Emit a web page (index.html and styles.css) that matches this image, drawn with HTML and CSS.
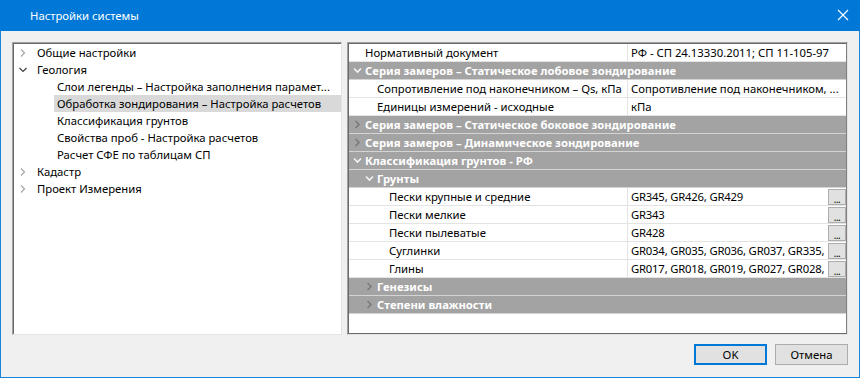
FILE: index.html
```html
<!DOCTYPE html>
<html lang="ru">
<head>
  <meta charset="UTF-8" />
  <title>Настройки системы</title>
  <link rel="stylesheet" href="styles.css">
</head>
<body>
  <div class="window">
    <div class="titlebar">
      <span class="title">Настройки системы</span>
      <span class="close">
        <svg width="12" height="12" viewBox="0 0 12 12"><path d="M1 1 L11 11 M11 1 L1 11" stroke="#fff" stroke-width="1.1" fill="none"/></svg>
      </span>
    </div>

    <div class="dialog">
      <div class="panes">
        <!-- дерево разделов -->
        <div class="tree">
          <div class="node">
            <span class="arrow"><svg width="8" height="8" viewBox="0 0 8 8"><path d="M2 0.5 L5.5 4 L2 7.5" class="chev closed"/></svg></span>
            <span class="label">Общие настройки</span>
          </div>
          <div class="node">
            <span class="arrow"><svg width="8" height="8" viewBox="0 0 8 8"><path d="M0.5 2 L4 5.5 L7.5 2" class="chev open"/></svg></span>
            <span class="label">Геология</span>
          </div>
          <div class="node child"><span class="label">Слои легенды – Настройка заполнения парамет...</span></div>
          <div class="node child selected"><span class="label">Обработка зондирования – Настройка расчетов</span></div>
          <div class="node child"><span class="label">Классификация грунтов</span></div>
          <div class="node child"><span class="label">Свойства проб - Настройка расчетов</span></div>
          <div class="node child"><span class="label">Расчет СФЕ по таблицам СП</span></div>
          <div class="node">
            <span class="arrow"><svg width="8" height="8" viewBox="0 0 8 8"><path d="M2 0.5 L5.5 4 L2 7.5" class="chev closed"/></svg></span>
            <span class="label">Кадастр</span>
          </div>
          <div class="node">
            <span class="arrow"><svg width="8" height="8" viewBox="0 0 8 8"><path d="M2 0.5 L5.5 4 L2 7.5" class="chev closed"/></svg></span>
            <span class="label">Проект Измерения</span>
          </div>
        </div>

        <!-- сетка свойств -->
        <div class="grid">
          <div class="grid-inner">
            <div class="prop">
              <div class="name lvl0">Нормативный документ</div>
              <div class="value">РФ - СП 24.13330.2011; СП 11-105-97</div>
            </div>
            <div class="cat">
              <span class="carrow"><svg width="9" height="9" viewBox="0 0 9 9"><path d="M1 2.5 L4.5 6 L8 2.5" class="cv open"/></svg></span>
              <span>Серия замеров – Статическое лобовое зондирование</span>
            </div>
            <div class="prop">
              <div class="name lvl1">Сопротивление под наконечником – Qs, кПа</div>
              <div class="value">Сопротивление под наконечником, ...</div>
            </div>
            <div class="prop">
              <div class="name lvl1">Единицы измерений - исходные</div>
              <div class="value">кПа</div>
            </div>
            <div class="cat">
              <span class="carrow"><svg width="9" height="9" viewBox="0 0 9 9"><path d="M2.5 1 L6 4.5 L2.5 8" class="cv closed"/></svg></span>
              <span>Серия замеров – Статическое боковое зондирование</span>
            </div>
            <div class="cat">
              <span class="carrow"><svg width="9" height="9" viewBox="0 0 9 9"><path d="M2.5 1 L6 4.5 L2.5 8" class="cv closed"/></svg></span>
              <span>Серия замеров – Динамическое зондирование</span>
            </div>
            <div class="cat">
              <span class="carrow"><svg width="9" height="9" viewBox="0 0 9 9"><path d="M1 2.5 L4.5 6 L8 2.5" class="cv open"/></svg></span>
              <span>Классификация грунтов - РФ</span>
            </div>
            <div class="cat sub">
              <span class="carrow"><svg width="9" height="9" viewBox="0 0 9 9"><path d="M1 2.5 L4.5 6 L8 2.5" class="cv open"/></svg></span>
              <span>Грунты</span>
            </div>
            <div class="prop">
              <div class="name lvl2">Пески крупные и средние</div>
              <div class="value"><span class="vtext">GR345, GR426, GR429</span><span class="dots">...</span></div>
            </div>
            <div class="prop">
              <div class="name lvl2">Пески мелкие</div>
              <div class="value"><span class="vtext">GR343</span><span class="dots">...</span></div>
            </div>
            <div class="prop">
              <div class="name lvl2">Пески пылеватые</div>
              <div class="value"><span class="vtext">GR428</span><span class="dots">...</span></div>
            </div>
            <div class="prop">
              <div class="name lvl2">Суглинки</div>
              <div class="value"><span class="vtext">GR034, GR035, GR036, GR037, GR335,</span><span class="dots">...</span></div>
            </div>
            <div class="prop">
              <div class="name lvl2">Глины</div>
              <div class="value"><span class="vtext">GR017, GR018, GR019, GR027, GR028,</span><span class="dots">...</span></div>
            </div>
            <div class="cat sub">
              <span class="carrow"><svg width="9" height="9" viewBox="0 0 9 9"><path d="M2.5 1 L6 4.5 L2.5 8" class="cv closed"/></svg></span>
              <span>Генезисы</span>
            </div>
            <div class="cat sub">
              <span class="carrow"><svg width="9" height="9" viewBox="0 0 9 9"><path d="M2.5 1 L6 4.5 L2.5 8" class="cv closed"/></svg></span>
              <span>Степени влажности</span>
            </div>
          </div>
        </div>
      </div>

      <div class="buttons">
        <button class="btn default">OK</button>
        <button class="btn">Отмена</button>
      </div>
    </div>
  </div>
</body>
</html>
```

FILE: styles.css
```css
* {
  box-sizing: border-box;
}

body {
  margin: 0;
  font-family: "Noto Sans", sans-serif;
  font-size: 11.3px;
  color: #000;
  background: #f0f0f0;
}

.window {
  width: 860px;
  height: 378px;
  border: 1px solid #1883d7;
  border-top: none;
  display: flex;
  flex-direction: column;
  background: #f0f0f0;
}

.titlebar {
  height: 31px;
  margin: 0 -1px;
  background: #0078d7;
  color: #fff;
  display: flex;
  align-items: center;
  justify-content: space-between;
  flex-shrink: 0;
}

.title {
  padding-left: 30px;
  padding-bottom: 1px;
}

.close {
  width: 12px;
  height: 12px;
  margin-right: 11px;
  margin-bottom: 1px;
  display: flex;
}

.dialog {
  flex: 1;
  padding: 11px 11px 0 11px;
  display: flex;
  flex-direction: column;
}

.panes {
  display: flex;
  gap: 5px;
  height: 293px;
}

/* tree */
.tree {
  width: 330px;
  background: #fff;
  border: 1px solid;
  border-color: #a0a0a0 #e3e3e3 #e3e3e3 #a0a0a0;
  box-shadow: inset 1px 1px 0 #696969;
  padding: 1px 0 0 1px;
}

.node {
  height: 17px;
  display: flex;
  align-items: center;
  white-space: nowrap;
}

.arrow {
  width: 18px;
  display: flex;
  justify-content: center;
}

.chev {
  fill: none;
  stroke-width: 1.2;
}

.chev.closed { stroke: #a6a6a6; }
.chev.open { stroke: #404040; }

.node .label {
  padding-left: 5px;
}

.node.child {
  margin-left: 40px;
}

.node.child .label {
  padding-left: 3px;
}

.node.selected {
  background: #d9d9d9;
}

/* property grid */
.grid {
  width: 501px;
  background: #fff;
  border: 1px solid;
  border-color: #a0a0a0 #e3e3e3 #e3e3e3 #a0a0a0;
  display: flex;
}

.grid-inner {
  flex: 1;
  border: 1px solid #696969;
  border-right-color: #808080;
  overflow: hidden;
}

.prop {
  height: 18px;
  border-bottom: 1px solid #e3e3e3;
  display: flex;
  white-space: nowrap;
}

.name {
  width: 279px;
  flex-shrink: 0;
  border-right: 1px solid #e3e3e3;
  overflow: hidden;
  line-height: 17px;
}

.name.lvl0 { padding-left: 16px; }
.name.lvl1 { padding-left: 28px; }
.name.lvl2 { padding-left: 40px; }

.value {
  flex: 1;
  min-width: 0;
  padding-left: 3px;
  line-height: 17px;
  display: flex;
  overflow: hidden;
}

.vtext {
  flex: 1;
  overflow: hidden;
  letter-spacing: -0.2px;
}

.dots {
  width: 18px;
  height: 16px;
  margin-top: 1px;
  border: 1px solid #adadad;
  background: #e1e1e1;
  font-size: 10px;
  line-height: 19px;
  text-align: center;
  flex-shrink: 0;
  letter-spacing: -0.5px;
}

.cat {
  height: 18px;
  background: #a3a3a3;
  border-bottom: 1px solid #d4d4d4;
  color: #fff;
  font-weight: bold;
  display: flex;
  align-items: center;
  white-space: nowrap;
}

.cat.sub {
  padding-left: 12px;
}

.carrow {
  width: 16px;
  display: flex;
  justify-content: center;
}

.cv {
  fill: none;
  stroke-width: 1.6;
}

.cv.open { stroke: #f4f4f4; }
.cv.closed { stroke: #7a7a7a; }

/* buttons */
.buttons {
  display: flex;
  justify-content: flex-end;
  gap: 8px;
  margin-top: 9px;
}

.btn {
  width: 73px;
  height: 21px;
  background: #e1e1e1;
  border: 1px solid #adadad;
  font-family: "Noto Sans", sans-serif;
  font-size: 11.3px;
  color: #000;
  padding: 0;
}

.btn.default {
  border: 2px solid #0078d7;
}
```
